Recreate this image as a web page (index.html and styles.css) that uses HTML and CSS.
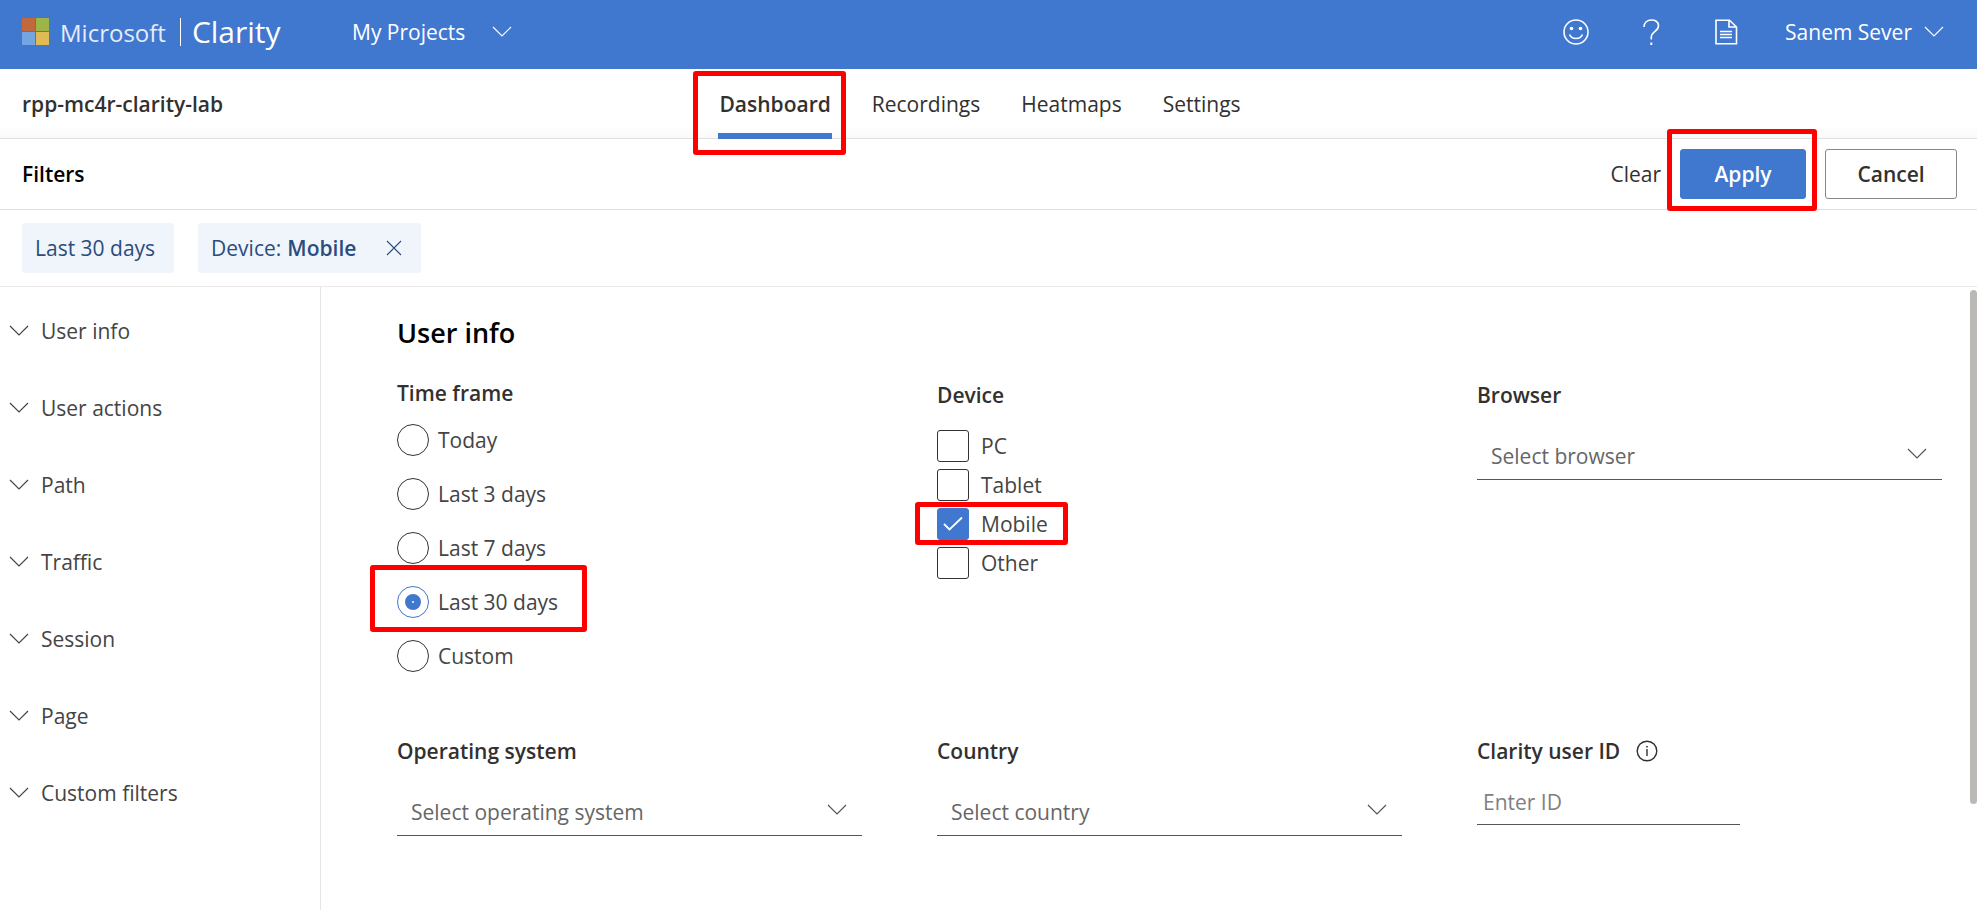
FILE: index.html
```html
<!DOCTYPE html>
<html lang="en">
<head>
<meta charset="utf-8">
<meta name="viewport" content="width=device-width, initial-scale=1">
<title>Microsoft Clarity</title>
<link rel="stylesheet" href="styles.css">
</head>
<body>
<svg class="sprite" aria-hidden="true">
  <symbol id="chevron" viewBox="0 0 20 12"><path d="M1 1l9 9 9-9" fill="none" stroke="currentColor" stroke-width="1.2"/></symbol>
</svg>

<header class="topbar">
  <a class="brand" href="#">
    <svg class="brand-logo" viewBox="0 0 27 27" aria-hidden="true">
      <path fill="#c1683c" d="M0 0h13v13H0z"/><path fill="#9db446" d="M14 0h13v13H14z"/>
      <path fill="#74a5e2" d="M0 14h13v13H0z"/><path fill="#e0bb54" d="M14 14h13v13H14z"/>
    </svg>
    <span class="brand-company">Microsoft</span>
    <span class="brand-product">Clarity</span>
  </a>
  <button class="menu-button" type="button">My Projects <svg class="chevron menu-chevron"><use href="#chevron"/></svg></button>
  <div class="topbar-actions">
    <button class="icon-button" type="button" aria-label="Feedback">
      <svg viewBox="0 0 26 26"><circle cx="13" cy="13" r="12" fill="none" stroke="currentColor" stroke-width="1.6"/><circle cx="8.5" cy="9.500" r="1.800" fill="currentColor"/><circle cx="17.500" cy="9.500" r="1.800" fill="currentColor"/><path d="M6.500 15.500c2.600 5.400 10.400 5.400 13 0" fill="none" stroke="currentColor" stroke-width="1.600"/></svg>
    </button>
    <button class="icon-button" type="button" aria-label="Help">
      <svg viewBox="0 0 26 26"><path d="M6 8c0-9 14.500-9.300 14.500-1.300 0 6-7.200 6-7.200 11.300v2.500" fill="none" stroke="currentColor" stroke-width="1.600"/><path d="M12.300 23.500h2V26h-2z" fill="currentColor"/></svg>
    </button>
    <button class="icon-button" type="button" aria-label="Documentation">
      <svg viewBox="0 0 26 26"><path d="M3 1.200h13.500l7 6.800v16.800H3zM16 1.200V8h7.500M7 12.500h12M7 15.500h12M7 18.500h12" fill="none" stroke="currentColor" stroke-width="1.600"/></svg>
    </button>
  </div>
  <button class="menu-button account" type="button">Sanem Sever <svg class="chevron"><use href="#chevron"/></svg></button>
</header>

<div class="projectbar">
  <span class="project-name">rpp-mc4r-clarity-lab</span>
  <nav class="tabs">
    <a class="tab is-active" href="#" aria-current="page">Dashboard<span class="mark mark-tab"></span></a>
    <a class="tab" href="#">Recordings</a>
    <a class="tab" href="#">Heatmaps</a>
    <a class="tab" href="#">Settings</a>
  </nav>
</div>

<div class="filterbar">
  <h1 class="filterbar-title">Filters</h1>
  <button class="clear" type="button">Clear</button>
  <div class="marked"><button class="button button-primary" type="button">Apply</button><span class="mark mark-apply"></span></div>
  <button class="button" type="button">Cancel</button>
</div>

<div class="chips">
  <span class="chip">Last 30 days</span>
  <span class="chip">Device: <b>Mobile</b>
    <button class="chip-remove" type="button" aria-label="Remove device filter"><svg viewBox="0 0 16 16"><path d="M1 1l14 14M15 1L1 15" fill="none" stroke="currentColor" stroke-width="1.100"/></svg></button>
  </span>
</div>

<div class="layout">
  <nav class="sidebar">
    <button class="section" type="button"><svg class="chevron"><use href="#chevron"/></svg>User info</button>
    <button class="section" type="button"><svg class="chevron"><use href="#chevron"/></svg>User actions</button>
    <button class="section" type="button"><svg class="chevron"><use href="#chevron"/></svg>Path</button>
    <button class="section" type="button"><svg class="chevron"><use href="#chevron"/></svg>Traffic</button>
    <button class="section" type="button"><svg class="chevron"><use href="#chevron"/></svg>Session</button>
    <button class="section" type="button"><svg class="chevron"><use href="#chevron"/></svg>Page</button>
    <button class="section" type="button"><svg class="chevron"><use href="#chevron"/></svg>Custom filters</button>
  </nav>

  <main class="content">
    <h2 class="content-title">User info</h2>
    <form class="fields">
      <fieldset class="field">
        <legend class="label label-radios">Time frame</legend>
        <div class="radios">
          <label class="choice"><input class="radio" type="radio" name="time">Today</label>
          <label class="choice"><input class="radio" type="radio" name="time">Last 3 days</label>
          <label class="choice"><input class="radio" type="radio" name="time">Last 7 days</label>
          <label class="choice"><input class="radio" type="radio" name="time" checked>Last 30 days<span class="mark mark-radio"></span></label>
          <label class="choice"><input class="radio" type="radio" name="time">Custom</label>
        </div>
      </fieldset>
      <fieldset class="field">
        <legend class="label">Device</legend>
        <div class="checks">
          <label class="choice choice-check"><input class="check" type="checkbox">PC</label>
          <label class="choice choice-check"><input class="check" type="checkbox">Tablet</label>
          <label class="choice choice-check"><input class="check" type="checkbox" checked>Mobile<svg class="tick" viewBox="0 0 20 16" aria-hidden="true"><path d="M1 8l5.500 5.500L19 1.500" fill="none" stroke="#fff" stroke-width="1.800"/></svg><span class="mark mark-check"></span></label>
          <label class="choice choice-check"><input class="check" type="checkbox">Other</label>
        </div>
      </fieldset>
      <div class="field">
        <label class="label" for="browser">Browser</label>
        <div class="select-wrap"><select class="select" id="browser"><option>Select browser</option></select><svg class="chevron select-chevron"><use href="#chevron"/></svg></div>
      </div>
      <div class="field">
        <label class="label" for="os">Operating system</label>
        <div class="select-wrap"><select class="select" id="os"><option>Select operating system</option></select><svg class="chevron select-chevron"><use href="#chevron"/></svg></div>
      </div>
      <div class="field">
        <label class="label" for="country">Country</label>
        <div class="select-wrap"><select class="select" id="country"><option>Select country</option></select><svg class="chevron select-chevron"><use href="#chevron"/></svg></div>
      </div>
      <div class="field">
        <div class="label-row">
          <label class="label" for="userid">Clarity user ID</label>
          <svg class="info" viewBox="0 0 22 22" aria-hidden="true"><circle cx="11" cy="11" r="9.800" fill="none" stroke="currentColor" stroke-width="1.400"/><path d="M10.300 9h1.400v7h-1.400zM10.200 6h1.600v1.600h-1.600z" fill="currentColor"/></svg>
        </div>
        <input class="input" id="userid" type="text" placeholder="Enter ID">
      </div>
    </form>
    <div class="scroll-thumb"></div>
  </main>
</div>
</body>
</html>
```
FILE: styles.css
```css
* { box-sizing: border-box; }

body {
  margin: 0;
  min-height: 100vh;
  display: flex;
  flex-direction: column;
  background: #fff;
  color: #323130;
  font: 21px/28px "Open Sans", "Noto Sans", sans-serif;
}

button, input, select { font: inherit; color: inherit; }
button { padding: 0; border: 0; background: none; cursor: pointer; }
a { color: inherit; text-decoration: none; }
fieldset { margin: 0; padding: 0; border: 0; min-width: 0; }
legend { padding: 0; }

.sprite { display: none; }
.chevron { flex: none; width: 20px; height: 12px; }

.mark {
  position: absolute;
  z-index: 2;
  border: 5px solid #f00;
  border-radius: 3px;
  pointer-events: none;
}

/* Top bar */
.topbar {
  display: flex;
  align-items: center;
  height: 69px;
  padding: 0 33px 6px 22px;
  background: #4077cf;
  color: #fff;
}
.brand { display: flex; align-items: center; width: 330px; }
.brand-logo { width: 27px; height: 27px; }
.brand-company { margin: 2px 14px 0 11px; font-size: 24px; color: #e4ecf9; }
.brand-product { padding-left: 11px; border-left: 1px solid #fff; font-size: 30px; }
.menu-button { display: flex; align-items: center; }
.menu-button .chevron { margin-left: 12px; }
.menu-button .menu-chevron { margin-left: 27px; }
.topbar-actions { display: flex; gap: 49px; margin-left: auto; }
.icon-button { width: 26px; height: 26px; }
.icon-button svg { display: block; width: 26px; height: 26px; }
.account { margin-left: 46px; }

/* Project bar */
.projectbar {
  display: grid;
  grid-template-columns: 1fr auto 1fr;
  height: 70px;
  padding: 0 39px 0 22px;
  border-bottom: 1px solid #e1e1e1;
  background: linear-gradient(#fff 80%, #fafafa);
  line-height: 70px;
}
.project-name { font-weight: 600; }
.tabs { display: flex; gap: 39px; }
.tab { position: relative; padding: 0 1px; }
.tab.is-active { font-weight: 600; box-shadow: inset 0 -6px #4077cf; }
.mark-tab { inset: 2px -14px -16px -25px; }

/* Filter bar */
.filterbar {
  display: flex;
  align-items: center;
  height: 71px;
  padding: 0 20px 0 22px;
  border-bottom: 1px solid #e1e1e1;
}
.filterbar-title { margin: 0 auto 0 0; font-size: 21px; font-weight: 600; color: #000; }
.clear { margin-right: 19px; }
.marked { position: relative; margin-right: 19px; }
.mark-apply { inset: -20px -11px -12px -13px; }
.button {
  height: 50px;
  min-width: 132px;
  border: 1px solid #8a8886;
  border-radius: 3px;
  background: #fff;
  font-weight: 600;
}
.button-primary { min-width: 126px; border-color: #4077cf; background: #4077cf; color: #fff; }

/* Active filters */
.chips {
  display: flex;
  gap: 24px;
  padding: 13px 22px;
  border-bottom: 1px solid #eaeaea;
}
.chip {
  display: flex;
  align-items: center;
  gap: 6px;
  height: 50px;
  padding: 0 19px 0 13px;
  border-radius: 3px;
  background: #eff5fa;
  color: #2b4c7e;
}
.chip b { font-weight: 600; }
.chip-remove { width: 16px; height: 16px; margin-left: 24px; }
.chip-remove svg { display: block; }

/* Body */
.layout { flex: 1; display: flex; }
.sidebar { flex: none; width: 321px; padding-top: 5px; border-right: 1px solid #e5e5e5; }
.section {
  display: flex;
  align-items: center;
  gap: 12px;
  width: 100%;
  height: 77px;
  padding-left: 9px;
  color: #444;
}
.content { position: relative; flex: 1; padding: 28px 35px 24px 76px; }
.content-title { margin: 0; font-size: 27px; line-height: 36px; font-weight: 600; color: #000; }
.fields { display: grid; grid-template-columns: repeat(3, 1fr); gap: 61px 75px; margin-top: 26px; }
.label { display: block; font-weight: 600; line-height: 36px; }
.label-radios { line-height: 32px; }
.label-row { display: flex; align-items: center; gap: 16px; }
.info { width: 22px; height: 22px; }
.choice { position: relative; display: flex; align-items: center; gap: 9px; width: fit-content; color: #444; }
.radios { display: flex; flex-direction: column; gap: 22px; padding-top: 15px; }
.radio {
  appearance: none;
  display: grid;
  place-items: center;
  width: 32px;
  height: 32px;
  margin: 0;
  border: 1px solid #333;
  border-radius: 50%;
}
.radio:checked { border-color: #4077cf; }
.radio:checked::before {
  content: "";
  width: 2px;
  height: 2px;
  border: 7px solid #4077cf;
  box-sizing: content-box;
  border-radius: 50%;
  background: #fff;
}
.mark-radio { inset: -21px -29px -14px -27px; }
.checks { display: flex; flex-direction: column; gap: 7px; padding-top: 17px; }
.choice-check { gap: 12px; }
.check {
  appearance: none;
  width: 32px;
  height: 32px;
  margin: 0;
  border: 1px solid #333;
  border-radius: 3px;
}
.check:checked { border-color: #4077cf; background: #4077cf; }
.tick { position: absolute; left: 6px; top: 8px; width: 20px; height: 16px; }
.mark-check { inset: -6px -20px -5px -22px; }
.select-wrap { position: relative; margin-top: 17px; }
.select {
  appearance: none;
  width: 100%;
  height: 50px;
  padding: 2px 50px 0 14px;
  border: 0;
  border-bottom: 1px solid #555;
  background: #fff;
  color: #666;
}
.select-chevron { position: absolute; right: 15px; top: 18px; color: #555; pointer-events: none; }
.input {
  width: 263px;
  max-width: 100%;
  height: 46px;
  margin-top: 10px;
  padding: 0 6px;
  border: 0;
  border-bottom: 1px solid #555;
}
.input::placeholder { color: #808080; opacity: 1; }
.scroll-thumb {
  position: absolute;
  top: 3px;
  right: 0;
  bottom: 106px;
  width: 7px;
  border-radius: 4px;
  background: #bab9b5;
}
```
